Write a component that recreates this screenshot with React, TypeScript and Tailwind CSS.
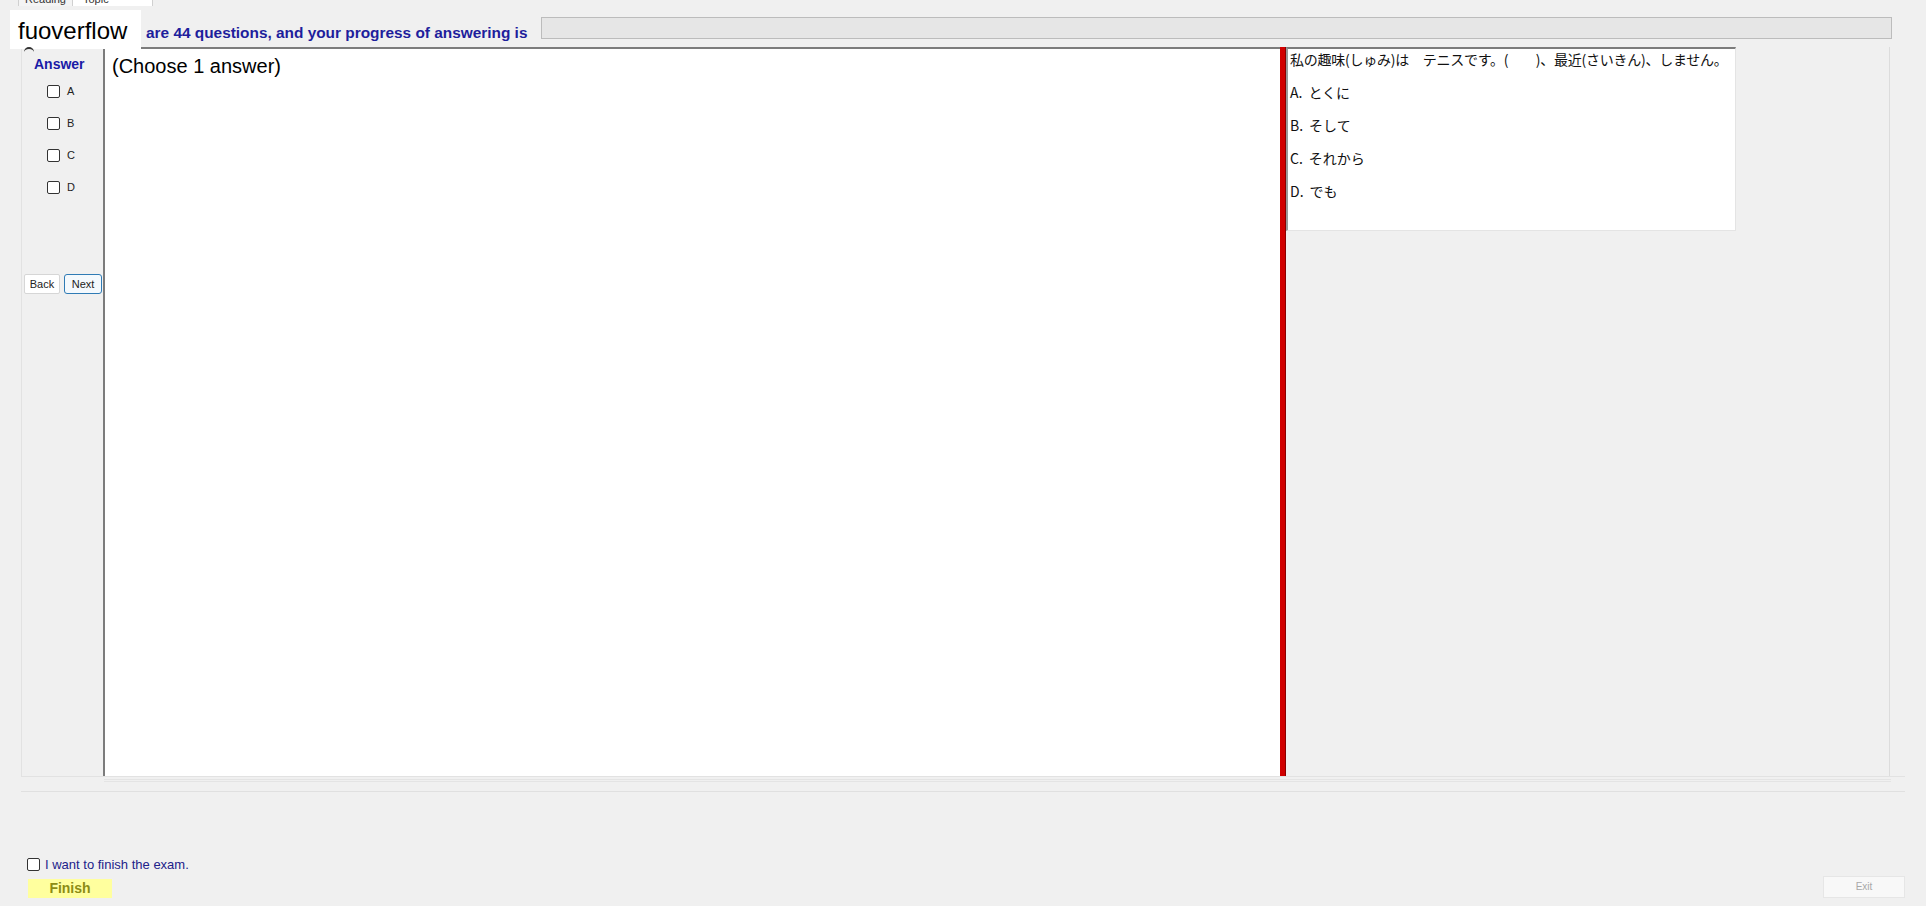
import React from "react";

const OPTIONS = ["A", "B", "C", "D"];

const CHOICES = [
  { key: "A.", text: "とくに" },
  { key: "B.", text: "そして" },
  { key: "C.", text: "それから" },
  { key: "D.", text: "でも" },
];

function Box({ className = "" }: { className?: string }) {
  return (
    <span
      className={`inline-block h-[13px] w-[13px] shrink-0 rounded-[2px] border border-[#333333] bg-white ${className}`}
    />
  );
}

function AnswerPanel() {
  return (
    <div className="flex w-[82px] shrink-0 flex-col border-l border-[#e2e2e2]">
      <div className="mt-[9px] pl-[12px] text-[14px] font-bold leading-[16px] text-[#1a1aa6]">
        Answer
      </div>
      <div className="mt-[13px] flex flex-col gap-[19px] pl-[25px]">
        {OPTIONS.map((o) => (
          <label key={o} className="flex items-center gap-[7px] text-[11px] leading-[13px] text-[#222]">
            <Box />
            {o}
          </label>
        ))}
      </div>
      <div className="mt-[80px] flex gap-[4px] pl-[2px]">
        <button className="h-[20px] w-[36px] rounded-[2px] border border-[#d6d6d6] bg-white text-[11px] leading-[18px] text-[#222]">
          Back
        </button>
        <button className="h-[20px] w-[38px] rounded-[3px] border border-[#2f7bb5] bg-[#f4f9fd] text-[11px] leading-[18px] text-[#222]">
          Next
        </button>
      </div>
    </div>
  );
}

function QuestionPanel() {
  return (
    <div className="flex w-[1177px] shrink-0 flex-col border-l-2 border-t-2 border-[#7c7c7c] bg-white">
      <div className="pl-[7px] pt-[5px] text-[20px] leading-[24px] text-black">
        (Choose 1 answer)
      </div>
    </div>
  );
}

function ContentPanel() {
  return (
    <div className="flex w-[604px] shrink-0 flex-col border-r border-[#dcdcdc]">
      <div
        className="flex h-[184px] w-[450px] flex-col border-b border-l-2 border-r border-t-2 border-b-[#e4e4e4] border-l-[#9a9a9a] border-r-[#e4e4e4] border-t-[#7c7c7c] bg-white pl-[2px] text-[14px] leading-[18px] text-[#111]"
        style={{ fontFamily: '"Noto Sans CJK JP", "Liberation Sans", sans-serif' }}
      >
        <div className="mt-[1px] whitespace-nowrap tracking-[-0.25px]">
          私の趣味(しゅみ)は　テニスです。(　　)、最近(さいきん)、しません。
        </div>
        <div className="mt-[15px] flex flex-col gap-[15px]">
          {CHOICES.map((c) => (
            <div key={c.key} className="flex gap-[6px]">
              <span>{c.key}</span>
              <span>{c.text}</span>
            </div>
          ))}
        </div>
      </div>
    </div>
  );
}

export default function App() {
  return (
    <div
      className="relative h-[906px] w-full overflow-hidden bg-[#f0f0f0]"
      style={{ fontFamily: '"Liberation Sans", Arial, sans-serif' }}
    >
      {/* tab strip, mostly scrolled out of view */}
      <div className="flex h-[6px] items-end overflow-hidden pl-[18px]">
        <div className="flex h-[14px] w-[55px] items-end justify-center border-x border-[#d0d0d0] bg-[#f4f4f4] text-[11px] leading-[14px] text-[#333]">
          Reading
        </div>
        <div className="flex h-[14px] w-[80px] items-end border-r border-[#d0d0d0] bg-white pl-[10px] text-[11px] leading-[14px] text-[#333]">
          Topic
        </div>
      </div>

      {/* header */}
      <div className="flex h-[41px] items-start pl-[146px]">
        <div className="mt-[19px] w-[380px] whitespace-nowrap text-[15.4px] font-bold leading-[16px] text-[#1e1e9c]">
          are 44 questions, and your progress of answering is
        </div>
        <div className="ml-[15px] mt-[11px] h-[22px] w-[1351px] border border-[#bcbcbc] bg-[#e6e6e6]" />
      </div>

      {/* main group */}
      <div className="ml-[21px] flex h-[745px] w-[1884px] flex-col border-b border-[#e0e0e0]">
        <div className="flex h-[730px] border-b border-[#e2e2e2]">
          <AnswerPanel />
          <QuestionPanel />
          <div className="w-[6px] shrink-0 border-r border-[#8a0000] bg-[#d10000]" />
          <ContentPanel />
          <div className="flex-1" />
        </div>
        <div className="ml-[83px] mr-[14px] mt-[2px] h-[3px] border-y border-[#e4e4e4]" />
      </div>

      {/* footer */}
      <div className="flex h-[113px] items-end justify-between pb-[7px] pl-[27px] pr-[21px]">
        <div className="flex flex-col">
          <label className="flex items-center gap-[5px] text-[13px] leading-[13px] text-[#22228a]">
            <Box />
            I want to finish the exam.
          </label>
          <button className="ml-[1px] mt-[8px] h-[19px] w-[84px] bg-[#ffff9e] text-[14px] font-bold leading-[19px] text-[#8c8c14]">
            Finish
          </button>
        </div>
        <button className="h-[22px] w-[82px] border border-[#e6e6e6] bg-[#f8f8f8] text-[10px] leading-[20px] text-[#a8a8a8]">
          Exit
        </button>
      </div>

      {/* overlay watermark */}
      <div className="absolute left-[10px] top-[10px] h-[39px] w-[131px] bg-white pl-[8px] pt-[3px] text-[24px] leading-[36px] text-black">
        fuoverflow
      </div>
      <div className="absolute left-[24px] top-[47px] h-[6px] w-[10px] rounded-t-full border-t-2 border-[#333]" />
    </div>
  );
}
